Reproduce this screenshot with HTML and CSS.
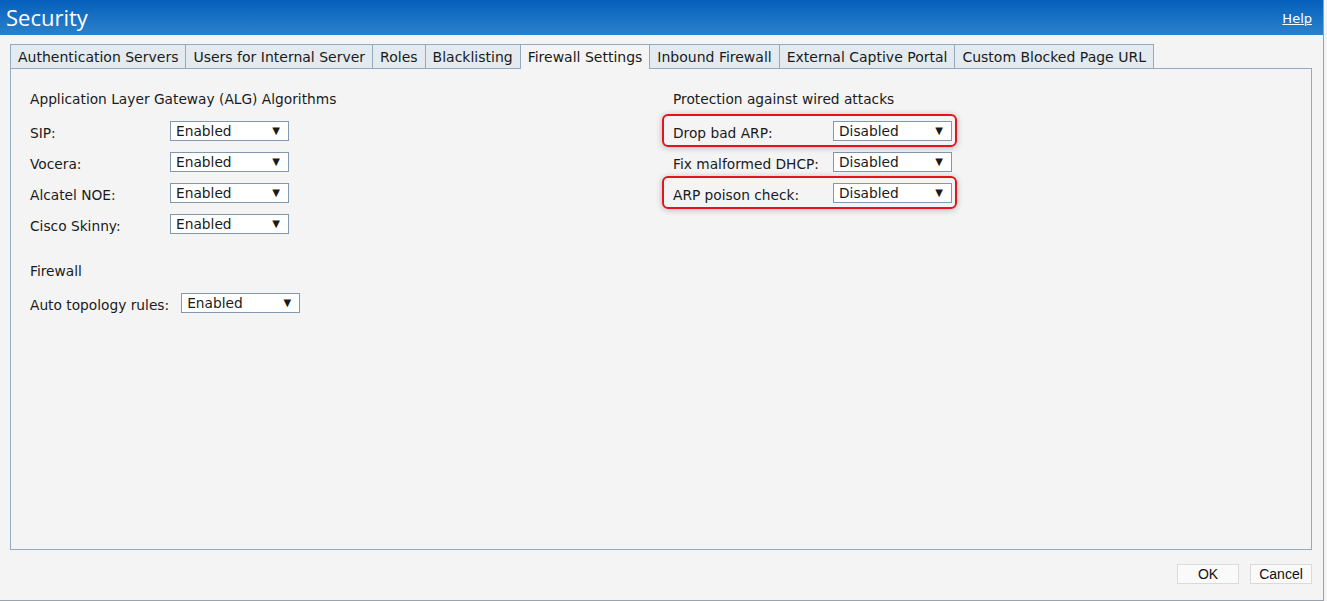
FILE: index.html
```html
<!DOCTYPE html>
<html lang="en">
<head>
    <meta charset="UTF-8">
    <meta name="viewport" content="width=device-width, initial-scale=1.0">
    <title>Security</title>
    <link rel="stylesheet" href="styles.css">
</head>
<body>

<div class="window">
    <header class="titlebar">
        <h1>Security</h1>
        <a href="#" class="help">Help</a>
    </header>

    <div class="content">
        <ul class="tabs">
            <li>Authentication Servers</li>
            <li>Users for Internal Server</li>
            <li>Roles</li>
            <li>Blacklisting</li>
            <li class="active">Firewall Settings</li>
            <li>Inbound Firewall</li>
            <li>External Captive Portal</li>
            <li>Custom Blocked Page URL</li>
        </ul>

        <div class="panel">
            <div class="col col-left">
                <section class="group">
                    <h2>Application Layer Gateway (ALG) Algorithms</h2>
                    <div class="row">
                        <label>SIP:</label>
                        <div class="select">Enabled<span class="caret">&#9660;</span></div>
                    </div>
                    <div class="row">
                        <label>Vocera:</label>
                        <div class="select">Enabled<span class="caret">&#9660;</span></div>
                    </div>
                    <div class="row">
                        <label>Alcatel NOE:</label>
                        <div class="select">Enabled<span class="caret">&#9660;</span></div>
                    </div>
                    <div class="row">
                        <label>Cisco Skinny:</label>
                        <div class="select">Enabled<span class="caret">&#9660;</span></div>
                    </div>
                </section>

                <section class="group">
                    <h2>Firewall</h2>
                    <div class="row row-auto">
                        <label>Auto topology rules:</label>
                        <div class="select">Enabled<span class="caret">&#9660;</span></div>
                    </div>
                </section>
            </div>

            <div class="col col-right">
                <section class="group">
                    <h2>Protection against wired attacks</h2>
                    <div class="row flagged">
                        <label>Drop bad ARP:</label>
                        <div class="select">Disabled<span class="caret">&#9660;</span></div>
                    </div>
                    <div class="row">
                        <label>Fix malformed DHCP:</label>
                        <div class="select">Disabled<span class="caret">&#9660;</span></div>
                    </div>
                    <div class="row flagged">
                        <label>ARP poison check:</label>
                        <div class="select">Disabled<span class="caret">&#9660;</span></div>
                    </div>
                </section>
            </div>
        </div>

        <div class="actions">
            <button class="btn btn-ok">OK</button>
            <button class="btn">Cancel</button>
        </div>
    </div>
</div>

</body>
</html>
```

FILE: styles.css
```css
body {
    margin: 0;
    background-color: #f4f4f4;
    font-family: 'DejaVu Sans', Verdana, sans-serif;
    font-size: 13.75px;
    color: #1a1a1a;
}
.window {
    width: 1323px;
    height: 600px;
    border-right: 1px solid #9aa2ab;
    border-bottom: 1px solid #9aa2ab;
    background-color: #f4f4f4;
    overflow: hidden;
}
.titlebar {
    display: flex;
    align-items: center;
    justify-content: space-between;
    height: 35px;
    padding: 0 11px 0 6px;
    background: linear-gradient(to bottom, #0560bc, #2b81ca);
    color: white;
}
.titlebar h1 {
    margin: 0;
    font-family: 'Open Sans', 'Noto Sans', sans-serif;
    font-size: 22px;
    font-weight: 400;
    line-height: 35px;
}
.help {
    color: white;
    font-size: 13px;
    text-decoration: underline;
    margin-top: 1px;
}
.content {
    padding: 9px 11px 0 10px;
}
.tabs {
    display: flex;
    margin: 0;
    padding: 0;
    list-style: none;
}
.tabs li {
    height: 22px;
    line-height: 22px;
    padding: 1px 7px 0;
    border: 1px solid #93aac1;
    border-bottom: none;
    margin-right: -1px;
    font-size: 14px;
    background-color: #e3ebf0;
    white-space: nowrap;
}
.tabs li.active {
    background-color: #f4f4f4;
    position: relative;
    z-index: 1;
    height: 23px;
    margin-bottom: -1px;
}
.panel {
    display: grid;
    grid-template-columns: 643px 1fr;
    height: 458px;
    padding: 22px 0 0 19px;
    border: 1px solid #93aac1;
    background-color: #f4f4f4;
}
.group + .group {
    margin-top: 29px;
}
.group h2 {
    margin: 0 0 13px;
    font-size: 13.75px;
    font-weight: 400;
    line-height: 17px;
}
.row {
    display: flex;
    align-items: flex-start;
    width: fit-content;
    height: 20px;
    margin-bottom: 11px;
}
.row label {
    width: 140px;
    line-height: 20px;
    padding-top: 2px;
}
.col-right .row label {
    width: 160px;
}
.row-auto label {
    width: auto;
    margin-right: 12px;
}
.select {
    display: flex;
    justify-content: space-between;
    box-sizing: border-box;
    width: 119px;
    height: 20px;
    line-height: 18px;
    padding: 0 8px 0 5px;
    border: 1px solid #8198ae;
    background-color: white;
}
.caret {
    font-size: 10px;
}
.flagged {
    position: relative;
}
.flagged::before {
    content: '';
    position: absolute;
    left: -11px;
    right: -5px;
    top: -7px;
    bottom: -6px;
    border: 2px solid #e3141c;
    border-radius: 6px;
    box-shadow: 0 1px 6px rgba(0, 0, 0, 0.25);
}
.actions {
    display: flex;
    justify-content: flex-end;
    gap: 11px;
    margin-top: 14px;
}
.btn {
    width: 62px;
    height: 20px;
    padding: 0;
    font-family: 'Liberation Sans', Arial, sans-serif;
    font-size: 14px;
    color: #111;
    background-color: #fafafa;
    border: 1px solid #dadada;
    border-radius: 0;
}
```
